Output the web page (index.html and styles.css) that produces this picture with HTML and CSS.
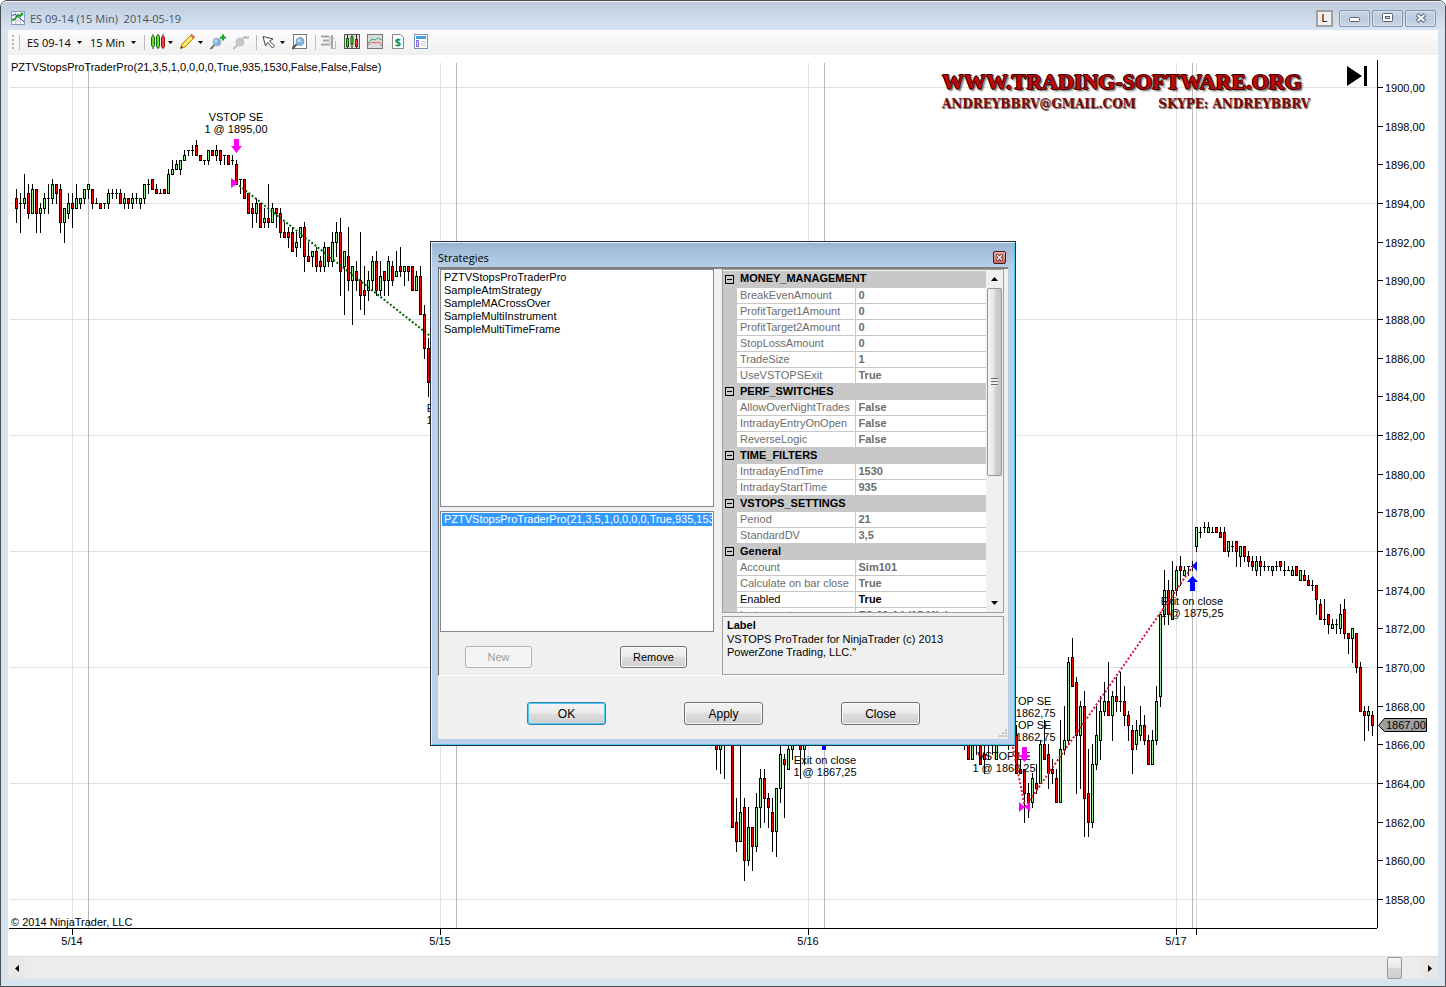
FILE: index.html
```
<!DOCTYPE html>
<html lang="en">
<head>
    <meta charset="UTF-8">
    <meta name="viewport" content="width=device-width, initial-scale=1.0">
    <title>ES 09-14 (15 Min) 2014-05-19</title>
    <link rel="stylesheet" href="styles.css">
</head>
<body>
    <div class="window">
        <header class="titlebar">
            <svg class="app-icon" width="14" height="14" viewBox="0 0 14 14">
                <rect x="0.5" y="0.5" width="13" height="13" fill="#f4f6fb" stroke="#8c98b8"/>
                <path d="M1 4.5H13M1 9.5H13M4.5 1V13M9.5 1V13" stroke="#c3cce0"/>
                <path d="M1 9L4 8L7 4L9 5L12 2" fill="none" stroke="#22a02a" stroke-width="2"/>
                <path d="M1 5L4 3L7 6L10 8L13 11" fill="none" stroke="#3a62a8"/>
            </svg>
            <h1>ES 09-14 (15 Min)&nbsp; 2014-05-19</h1>
            <button class="link-button" type="button">L</button>
            <button class="win-button" type="button" aria-label="Minimize">
                <svg width="12" height="10" viewBox="0 0 12 10"><rect x="0.5" y="4.5" width="10" height="4" rx="1" fill="#fff" stroke="#5a6478"/></svg>
            </button>
            <button class="win-button" type="button" aria-label="Maximize">
                <svg width="12" height="10" viewBox="0 0 12 10"><rect x="0.5" y="0.5" width="10" height="8" rx="1" fill="#fff" stroke="#5a6478"/><rect x="3.5" y="3.5" width="4" height="2" fill="#c9d5e4" stroke="#5a6478"/></svg>
            </button>
            <button class="win-button" type="button" aria-label="Close window">
                <svg width="12" height="10" viewBox="0 0 12 10"><path d="M2 1.5L10 8.5M10 1.5L2 8.5" stroke="#5a6478" stroke-width="4"/><path d="M2.5 2L9.5 8M9.5 2L2.5 8" stroke="#fff" stroke-width="2"/></svg>
            </button>
        </header>

        <nav class="toolbar">
            <span class="grip"></span>
            <span class="sep first"></span>
            <span class="combo">
                <select aria-label="Instrument"><option>ES 09-14</option></select>
                <svg class="caret" width="5" height="3" viewBox="0 0 5 3"><path d="M0 0H5L2.5 3Z"/></svg>
            </span>
            <span class="combo">
                <select aria-label="Interval"><option>15 Min</option></select>
                <svg class="caret" width="5" height="3" viewBox="0 0 5 3"><path d="M0 0H5L2.5 3Z"/></svg>
            </span>
            <span class="sep"></span>
            <button type="button" aria-label="Chart style">
                <svg width="16" height="16" viewBox="0 0 16 16">
                    <path d="M3 0V15M8 0V15M13 0V15" stroke="#333"/>
                    <rect x="1.5" y="2.5" width="3" height="10" rx="1" fill="#5fe02a" stroke="#1d6b10"/>
                    <rect x="6.5" y="1.5" width="3" height="12" rx="1" fill="#5fe02a" stroke="#1d6b10"/>
                    <rect x="11.5" y="2.5" width="3" height="11" rx="1" fill="#f0453c" stroke="#8d1510"/>
                </svg>
                <svg class="caret" width="5" height="3" viewBox="0 0 5 3"><path d="M0 0H5L2.5 3Z"/></svg>
            </button>
            <button type="button" aria-label="Drawing tools">
                <svg width="16" height="16" viewBox="0 0 16 16">
                    <path d="M0.5 14.5L2 10L10.5 1.5L13.5 4.5L5 13Z" fill="#ffd73a" stroke="#b98a12"/>
                    <path d="M3.5 11.5L12 3" stroke="#fff3a8" stroke-width="1.5"/>
                    <path d="M10.5 1.5L12 0.5L14.5 3L13.5 4.5Z" fill="#f08c7c" stroke="#b05a4a"/>
                    <path d="M0.5 14.5L1.2 12L3 13.8Z" fill="#333"/>
                </svg>
                <svg class="caret" width="5" height="3" viewBox="0 0 5 3"><path d="M0 0H5L2.5 3Z"/></svg>
            </button>
            <button type="button" aria-label="Zoom in">
                <svg width="16" height="16" viewBox="0 0 16 16">
                    <path d="M0.5 15L4.5 11" stroke="#777" stroke-width="2"/>
                    <circle cx="7" cy="8" r="4" fill="#7fb2de" stroke="#a5b4c4"/>
                    <circle cx="6" cy="7" r="1.5" fill="#c5e0f6"/>
                    <path d="M13 0.5V6.5M10 3.5H16" stroke="#18a02a" stroke-width="2"/>
                </svg>
            </button>
            <button type="button" aria-label="Zoom out" disabled>
                <svg width="16" height="16" viewBox="0 0 16 16">
                    <path d="M0.5 15L4.5 11" stroke="#bbb" stroke-width="2"/>
                    <circle cx="7" cy="8" r="4" fill="#c6c6c6" stroke="#c0c0c0"/>
                    <path d="M10 3.5H16" stroke="#b5b5b5" stroke-width="2"/>
                </svg>
            </button>
            <span class="sep"></span>
            <button type="button" aria-label="Pointer">
                <svg width="16" height="16" viewBox="0 0 16 16">
                    <path d="M1 2.5L11 5L7.5 7L12.5 12L10.5 14L5.5 8.5L3.5 12Z" fill="#fff" stroke="#444"/>
                </svg>
                <svg class="caret" width="5" height="3" viewBox="0 0 5 3"><path d="M0 0H5L2.5 3Z"/></svg>
            </button>
            <button type="button" aria-label="Zoom frame">
                <svg width="16" height="16" viewBox="0 0 16 16">
                    <rect x="1.5" y="0.5" width="13" height="14" fill="#fff" stroke="#777"/>
                    <path d="M0 15L5 10" stroke="#555" stroke-width="2"/>
                    <circle cx="8" cy="7.5" r="4" fill="#84b6e0" stroke="#8a9db0"/>
                    <circle cx="7" cy="6.5" r="1.5" fill="#cfe6f8"/>
                </svg>
            </button>
            <span class="sep"></span>
            <button type="button" aria-label="Chart trader" disabled>
                <svg width="16" height="16" viewBox="0 0 16 16">
                    <path d="M0 2.5H8M2 6.5H8M0 10.5H8M11 1V15" stroke="#a5a5a5" stroke-width="2"/>
                    <path d="M11 4.5H14M11 14.5H15M14.5 7V15M9 2V12" stroke="#bcbcbc"/>
                </svg>
            </button>
            <button type="button" aria-label="Data series">
                <svg width="16" height="16" viewBox="0 0 16 16">
                    <rect x="0.5" y="0.5" width="15" height="14" fill="#dedede" stroke="#555"/>
                    <path d="M3.5 1V14M8 1V14M12.5 1V14" stroke="#222"/>
                    <rect x="2.5" y="4.5" width="2" height="8" fill="#48d820" stroke="#145c0c"/>
                    <rect x="7" y="3" width="2" height="7" fill="#48d820" stroke="#145c0c"/>
                    <rect x="11.5" y="5.5" width="2" height="7" fill="#f03a30" stroke="#8d1510"/>
                </svg>
            </button>
            <button type="button" aria-label="Indicators">
                <svg width="16" height="16" viewBox="0 0 16 16">
                    <rect x="0.5" y="0.5" width="15" height="14" fill="#d9dddb" stroke="#777"/>
                    <path d="M1 9L5 5L8 6L11 4L15 6" fill="none" stroke="#38a868"/>
                    <path d="M1 11L5 8L8 9L12 8L15 12" fill="none" stroke="#e06060"/>
                </svg>
            </button>
            <button type="button" aria-label="Strategies">
                <svg width="16" height="16" viewBox="0 0 16 16">
                    <path d="M2.5 0.5H10.5L13.5 3.5V14.5H2.5Z" fill="#fff" stroke="#888"/>
                    <text class="dollar" x="8" y="12" text-anchor="middle">$</text>
                </svg>
            </button>
            <button type="button" aria-label="Properties">
                <svg width="16" height="16" viewBox="0 0 16 16">
                    <rect x="1.5" y="0.5" width="13" height="14" fill="#fff" stroke="#7d92b8"/>
                    <rect x="3" y="2" width="10" height="3" fill="#4a9ae0"/>
                    <rect x="3.5" y="6.5" width="2" height="6" fill="#d8c8f8" stroke="#8a70d8"/>
                    <path d="M8 7.5H13M8 9.5H13M8 11.5H13" stroke="#cfcfcf"/>
                </svg>
            </button>
        </nav>

        <main class="chart">
            <svg class="plot" id="plot">
                <g id="grid"></g>
                <text x="3" y="16">PZTVStopsProTraderPro(21,3,5,1,0,0,0,0,True,935,1530,False,False,False)</text>
                <text x="3" y="871">© 2014 NinjaTrader, LLC</text>
                <g id="bars" shape-rendering="crispEdges"></g>
                <g class="notes" text-anchor="middle">
                    <text x="228" y="66">VSTOP SE</text>
                    <text x="228" y="78">1 @ 1895,00</text>
                    <text x="450" y="357">Exit on close</text>
                    <text x="450" y="369">1 @ 1887,00</text>
                    <text x="817" y="709">Exit on close</text>
                    <text x="817" y="721">1 @ 1867,25</text>
                    <text x="1016" y="650">VSTOP SE</text>
                    <text x="1016" y="662">1 @ 1862,75</text>
                    <text x="1016" y="674">VSTOP SE</text>
                    <text x="1016" y="686">1 @ 1862,75</text>
                    <text x="996" y="705">VSTOP LE</text>
                    <text x="996" y="717">1 @ 1868,25</text>
                    <text x="1184" y="550">Exit on close</text>
                    <text x="1184" y="562">1 @ 1875,25</text>
                </g>
                <g id="trades">
                    <path class="loss" d="M228 128L440 295"/>
                    <path class="win" d="M1004 688L1017 752M1017 752L1185 511"/>
                    <path class="sell" d="M226 84H231V91H234L228.5 98L223 91H226ZM223 123L230 128L223 133Z"/>
                    <path class="sell" d="M1014 692H1019V700H1022L1016.5 707L1011 700H1014ZM1011 747L1017 752L1022 747V757L1017 752L1011 757Z"/>
                    <path class="exit" d="M814 687H818V695H814ZM1184.5 521L1190 527H1187V536H1182V527H1179ZM1189 506V516L1184 511Z"/>
                </g>
            </svg>
            <svg class="prices" id="prices"></svg>
            <svg class="dates" id="dates"></svg>

            <div class="logo">
                <p class="logo-site">WWW.TRADING-SOFTWARE.ORG</p>
                <p class="logo-contact"><span>ANDREYBBRV@GMAIL.COM</span><span>SKYPE: ANDREYBBRV</span></p>
            </div>
            <button class="jump" type="button" aria-label="Go to last bar">
                <svg width="21" height="20" viewBox="0 0 21 20"><path d="M0 0L15 10L0 20ZM17 0H20V20H17Z"/></svg>
            </button>
        </main>

        <div class="hscroll">
            <button type="button" aria-label="Scroll left"><svg width="4" height="7" viewBox="0 0 4 7"><path d="M4 0V7L0 3.5Z"/></svg></button>
            <span class="hthumb"></span>
            <button type="button" aria-label="Scroll right"><svg width="4" height="7" viewBox="0 0 4 7"><path d="M0 0V7L4 3.5Z"/></svg></button>
        </div>
    </div>

    <section class="dialog" role="dialog" aria-labelledby="dialogTitle">
        <div class="dialog-title">
            <h2 id="dialogTitle">Strategies</h2>
            <button type="button" aria-label="Close dialog">
                <svg width="7" height="7" viewBox="0 0 7 7"><path d="M0.5 0.5L6.5 6.5M6.5 0.5L0.5 6.5" stroke="#5a2020" stroke-width="3"/><path d="M1 1L6 6M6 1L1 6" stroke="#fff" stroke-width="1.5"/></svg>
            </button>
        </div>
        <div class="dialog-body">
            <div class="panes">
                <div class="left-pane">
                    <select class="list available" size="5" aria-label="Available strategies">
                        <option>PZTVStopsProTraderPro</option>
                        <option>SampleAtmStrategy</option>
                        <option>SampleMACrossOver</option>
                        <option>SampleMultiInstrument</option>
                        <option>SampleMultiTimeFrame</option>
                    </select>
                    <select class="list active" size="5" aria-label="Active strategies">
                        <option selected>PZTVStopsProTraderPro(21,3,5,1,0,0,0,0,True,935,1530</option>
                    </select>
                    <div class="list-buttons">
                        <button class="btn" type="button" disabled>New</button>
                        <button class="btn" type="button">Remove</button>
                    </div>
                </div>
                <div class="right-pane">
                    <div class="props">
                        <div class="props-view">
                            <table>
                                <colgroup><col class="col-fold"><col class="col-name"><col></colgroup>
                                <tbody>
                                    <tr class="group"><td><i class="fold"></i></td><th colspan="2">MONEY_MANAGEMENT</th></tr>
                                    <tr><td></td><th>BreakEvenAmount</th><td>0</td></tr>
                                    <tr><td></td><th>ProfitTarget1Amount</th><td>0</td></tr>
                                    <tr><td></td><th>ProfitTarget2Amount</th><td>0</td></tr>
                                    <tr><td></td><th>StopLossAmount</th><td>0</td></tr>
                                    <tr><td></td><th>TradeSize</th><td>1</td></tr>
                                    <tr><td></td><th>UseVSTOPSExit</th><td>True</td></tr>
                                    <tr class="group"><td><i class="fold"></i></td><th colspan="2">PERF_SWITCHES</th></tr>
                                    <tr><td></td><th>AllowOverNightTrades</th><td>False</td></tr>
                                    <tr><td></td><th>IntradayEntryOnOpen</th><td>False</td></tr>
                                    <tr><td></td><th>ReverseLogic</th><td>False</td></tr>
                                    <tr class="group"><td><i class="fold"></i></td><th colspan="2">TIME_FILTERS</th></tr>
                                    <tr><td></td><th>IntradayEndTime</th><td>1530</td></tr>
                                    <tr><td></td><th>IntradayStartTime</th><td>935</td></tr>
                                    <tr class="group"><td><i class="fold"></i></td><th colspan="2">VSTOPS_SETTINGS</th></tr>
                                    <tr><td></td><th>Period</th><td>21</td></tr>
                                    <tr><td></td><th>StandardDV</th><td>3,5</td></tr>
                                    <tr class="group"><td><i class="fold"></i></td><th colspan="2">General</th></tr>
                                    <tr><td></td><th>Account</th><td>Sim101</td></tr>
                                    <tr><td></td><th>Calculate on bar close</th><td>True</td></tr>
                                    <tr class="editable"><td></td><th>Enabled</th><td>True</td></tr>
                                    <tr><td></td><th>Instrument</th><td>ES 09-14 (15 Min)</td></tr>
                                </tbody>
                            </table>
                        </div>
                        <div class="vscroll">
                            <button type="button" aria-label="Scroll up"><svg width="7" height="4" viewBox="0 0 7 4"><path d="M0 4H7L3.5 0Z"/></svg></button>
                            <span class="vthumb"></span>
                            <button type="button" aria-label="Scroll down"><svg width="7" height="4" viewBox="0 0 7 4"><path d="M0 0H7L3.5 4Z"/></svg></button>
                        </div>
                    </div>
                    <div class="help">
                        <h3>Label</h3>
                        <p>VSTOPS ProTrader for NinjaTrader (c) 2013 PowerZone Trading, LLC."</p>
                    </div>
                </div>
            </div>
            <div class="actions">
                <button class="btn default" type="button">OK</button>
                <button class="btn" type="button">Apply</button>
                <button class="btn" type="button">Close</button>
            </div>
            <svg class="resize" width="9" height="9" viewBox="0 0 9 9"><path d="M6 0H8V2H6ZM3 3H5V5H3ZM6 3H8V5H6ZM0 6H2V8H0ZM3 6H5V8H3ZM6 6H8V8H6Z"/></svg>
        </div>
    </section>

    <script src="chart.js"></script>
</body>
</html>
```
FILE: styles.css
```
* {
    box-sizing: border-box;
}

body {
    margin: 0;
    background: #fff;
    color: #000;
    font-family: 'Liberation Sans', Arial, sans-serif;
    font-size: 11px;
}

h1, h2, h3, p {
    margin: 0;
    font-size: 11px;
    font-weight: normal;
}

button {
    margin: 0;
    padding: 0;
    border: none;
    background: none;
    color: inherit;
    font: inherit;
}

svg {
    display: block;
}

/* main window */
.window {
    display: flex;
    flex-direction: column;
    height: 100vh;
    border: 1px solid #4b4b4f;
    border-radius: 7px 7px 0 0;
    padding: 0 7px 7px;
    background: #d7e4f2;
}

.titlebar {
    display: flex;
    align-items: center;
    flex: none;
    height: 29px;
    margin: 0 -7px;
    padding: 5px 9px 1px 10px;
    border-top: 1px solid #eef3f9;
    border-radius: 6px 6px 0 0;
    background: linear-gradient(#bdcbdc, #d7e4f2);
}

.titlebar h1 {
    flex: 1;
    margin-left: 5px;
    color: #4c5360;
    font-family: 'Open Sans', sans-serif;
    font-size: 11px;
}

.link-button {
    width: 17px;
    height: 17px;
    margin-right: 4px;
    border: 2px solid #a0a0a0;
    background: #f0f0f0;
}

.win-button {
    display: flex;
    align-items: center;
    justify-content: center;
    width: 31px;
    height: 17px;
    margin-left: 2px;
    border: 1px solid #8494ae;
    border-radius: 2px;
    background: linear-gradient(#c9d5e4, #bccbdd 50%, #c8d6e6);
    box-shadow: inset 0 0 0 1px #d8e2ee;
}

.toolbar {
    display: flex;
    align-items: center;
    gap: 7px;
    flex: none;
    height: 25px;
    padding: 0 0 1px 4px;
    background: linear-gradient(#fcfcfc, #f0f0f0);
    font-family: 'Open Sans', sans-serif;
}

.toolbar button {
    display: flex;
    align-items: center;
    gap: 2px;
}

.grip {
    width: 2px;
    height: 14px;
    margin-right: -2px;
    background: repeating-linear-gradient(#b8b8b8 0 2px, transparent 2px 4px);
}

.sep {
    width: 1px;
    height: 15px;
    margin-right: -2px;
    background: #bdbdbd;
}

.sep.first {
    margin-right: 0;
}

.combo {
    display: flex;
    align-items: center;
    gap: 6px;
    margin-right: 1px;
}

.combo select {
    margin: 0;
    padding: 0;
    border: none;
    background: none;
    appearance: none;
    color: #000;
    font: inherit;
}

.dollar {
    fill: #128a28;
    font-size: 11px;
    font-weight: bold;
}

/* chart */
.chart {
    position: relative;
    display: grid;
    grid-template-columns: 1fr 61px;
    grid-template-rows: 1fr 28px;
    flex: 1;
    min-height: 0;
    background: #fff;
}

.plot, .prices, .dates {
    width: 100%;
    height: 100%;
    min-width: 0;
    overflow: hidden;
}

.chart text {
    font-size: 11px;
}

.loss, .win {
    fill: none;
    stroke: #006400;
    stroke-width: 2;
    stroke-dasharray: 2 2;
}

.win {
    stroke: #dc143c;
}

.sell {
    fill: #f0f;
}

.exit {
    fill: #00f;
}

.logo {
    position: absolute;
    top: 12px;
    right: 128px;
    width: 368px;
    white-space: nowrap;
}

.logo-site {
    color: #c00808;
    font-family: 'Liberation Serif', serif;
    font-size: 22px;
    line-height: 30px;
    font-weight: bold;
    text-shadow: 1px 0 0 #300, -1px 0 0 #300, 0 1px 0 #300, 0 -1px 0 #300, 2px 2px 2px #444;
}

.logo-contact {
    display: flex;
    justify-content: space-between;
    color: #7c0a0a;
    font-family: 'DejaVu Serif', serif;
    font-size: 12px;
    line-height: 14px;
    font-weight: bold;
    text-shadow: 1px 1px 1px #555;
}

.jump {
    position: absolute;
    top: 11px;
    right: 70px;
}

/* bottom scrollbar */
.hscroll {
    display: flex;
    flex: none;
    height: 23px;
    border-top: 1px solid #dcdcdc;
    background: #ececec;
}

.hscroll button {
    display: flex;
    align-items: center;
    justify-content: center;
    width: 17px;
    background: #e8e8e8;
}

.hthumb {
    width: 15px;
    margin-left: auto;
    margin-right: 19px;
    border: 1px solid #979797;
    border-radius: 2px;
    background: linear-gradient(#f5f5f5, #e9e9e9 48%, #d5d5d5 52%, #d0d0d0);
}

/* dialog */
.dialog {
    position: absolute;
    left: 430px;
    top: 241px;
    width: 586px;
    padding: 1px 7px 6px;
    border: 1px solid #2b2f36;
    background: linear-gradient(#98b4d2, #b9d0ea 26px);
    box-shadow: inset 1px 1px 0 #e6f1fb, inset -1px -1px 0 #4cc8ee;
}

.dialog-title {
    display: flex;
    align-items: center;
    justify-content: space-between;
    height: 24px;
    padding: 5px 2px 1px 0;
}

.dialog-title h2 {
    font-family: 'Open Sans', sans-serif;
    font-size: 11px;
}

.dialog-title button {
    display: flex;
    align-items: center;
    justify-content: center;
    width: 13px;
    height: 13px;
    border: 1px solid #4c1820;
    border-radius: 2px;
    background: linear-gradient(#e8aca4, #c96a60);
}

.dialog-body {
    position: relative;
    background: #f0f0f0;
}

.panes {
    display: flex;
    gap: 8px;
    height: 409px;
    padding: 0 4px 0 1px;
    border: solid #fff;
    border-width: 2px 0 1px 1px;
    border-top-color: #808080;
    border-left-color: #696969;
}

.left-pane {
    display: flex;
    flex-direction: column;
    width: 274px;
}

.list {
    display: block;
    width: 274px;
    height: 238px;
    margin: 0;
    padding: 1px;
    border: 1px solid #828790;
    border-radius: 0;
    outline: none;
    background: #fff;
    color: #000;
    font-family: 'Liberation Sans', Arial, sans-serif;
    font-size: 11px;
    overflow: hidden;
}

.list option {
    height: 13px;
    min-height: 13px;
    padding: 0 2px;
    line-height: 13px;
    overflow: hidden;
}

.list option:checked {
    background: linear-gradient(#39f, #39f);
    color: #fff;
}

.list.active {
    height: 121px;
    margin-top: 4px;
}

.list-buttons {
    display: flex;
    justify-content: space-between;
    padding: 14px 27px 0 25px;
}

.btn {
    width: 79px;
    height: 23px;
    border: 1px solid #707070;
    border-radius: 3px;
    background: linear-gradient(#f2f2f2, #ebebeb 49%, #dddddd 51%, #cfcfcf);
    box-shadow: inset 0 0 0 1px #fafafa;
    font-size: 12px;
}

.list-buttons .btn {
    width: 67px;
    height: 22px;
    font-size: 11px;
}

.btn:disabled {
    border-color: #adb2b5;
    background: #f4f4f4;
    color: #9a9a9a;
}

.btn.default {
    border-color: #3c7fb1;
    box-shadow: inset 0 0 0 1px #48cdf0;
}

.right-pane {
    display: flex;
    flex-direction: column;
    flex: 1;
    gap: 3px;
}

.props {
    display: flex;
    height: 344px;
    border: 1px solid #a0a0a0;
    overflow: hidden;
}

.props-view {
    flex: 1;
    padding-top: 1px;
    overflow: hidden;
}

.props table {
    width: 100%;
    border-collapse: collapse;
    table-layout: fixed;
    background: #fff;
    color: #6d6d6d;
}

.col-fold {
    width: 14px;
}

.col-name {
    width: 118px;
}

.props tr > :first-child {
    padding: 0 0 0 2px;
    border: none;
    background: #c8c8c8;
}

.props th, .props td {
    height: 16px;
    padding: 0 0 0 3px;
    border-bottom: 1px solid #c8c8c8;
    line-height: 15px;
    text-align: left;
    white-space: nowrap;
}

.props th {
    border-right: 1px solid #c8c8c8;
    font-weight: normal;
}

.props td {
    font-weight: bold;
}

.props .group th {
    background: #c8c8c8;
    color: #000;
    font-weight: bold;
}

.props .editable {
    color: #000;
}

.fold {
    display: block;
    width: 9px;
    height: 9px;
    border: 1px solid #000;
    background: linear-gradient(#000, #000) center / 5px 1px no-repeat;
}

.vscroll {
    display: flex;
    flex-direction: column;
    width: 17px;
    background: #f0f0f0;
}

.vscroll button {
    display: flex;
    align-items: center;
    justify-content: center;
    height: 18px;
}

.vthumb {
    flex: none;
    width: 15px;
    height: 188px;
    margin: 0 1px auto;
    border: 1px solid #979797;
    border-radius: 2px;
    background:
        repeating-linear-gradient(#666 0 1px, #f0f0f0 1px 3px) center / 7px 8px no-repeat,
        linear-gradient(90deg, #f5f5f5, #e6e6e6 48%, #d2d2d2 52%, #c4c4c4);
}

.help {
    flex: 1;
    padding: 1px 4px;
    border: 1px solid #a0a0a0;
    line-height: 13px;
}

.help h3 {
    font-weight: bold;
    line-height: 15px;
}

.help p {
    width: 230px;
}

.actions {
    display: flex;
    justify-content: space-between;
    padding: 26px 88px 14px 89px;
}

.resize {
    position: absolute;
    right: 0;
    bottom: 1px;
    fill: #c0c0c0;
}
```
FILE: chart.js
```
// Bars are [open, high, low, close] in ticks of 0.25, relative to each run's base price
const runs = [
    { start: 0, base: 1894, bars: [
        [1,3,-4,-1],[0,2,-6,0],[0,6,-1,1],[2,4,-3,-2],[-2,4,-2,3],[3,3,-6,-2],[-2,0,-6,-1],[-1,2,-2,1],
        [1,4,-2,1],[1,5,0,4],[4,4,0,2],[3,4,-6,-4],[-4,-1,-8,-1],[-2,2,-3,0],[0,2,-5,-1],[-1,4,-1,1],
        [0,1,-1,1],[1,3,0,3],[3,4,1,4],[3,3,-1,0],[0,1,0,0],[0,0,-1,-1],[0,0,-1,0],[0,3,-1,2],
        [2,3,1,2],[2,3,1,2],[2,3,0,0],[0,2,-1,1],[1,1,-1,0],[0,2,-1,1],[1,2,0,1],[0,1,-1,1],
        [1,4,0,4],[4,5,2,4],[5,5,3,3],[3,4,2,2],[2,3,2,2],[3,3,2,2],[2,7,2,6],[6,9,6,7],
        [7,9,7,8],[7,9,6,9],[9,11,9,10],[11,11,10,11],[11,12,10,11],[12,13,10,10],[10,10,9,9],[9,9,8,9],
        [9,11,8,11],[11,11,10,10],[10,12,9,11],[11,11,8,9],[10,10,8,10],[10,10,8,8],[9,10,8,9],[8,9,4,4],
        [5,5,2,5],[5,5,1,1],[2,2,-2,-2],[-1,0,-5,-2],[-2,1,-4,0],[0,0,-5,-5],[-4,-1,-5,-3],[-3,4,-5,-4],
        [-4,0,-4,-1],[-1,-1,-5,-2],[-2,-1,-7,-6],[-6,-4,-7,-7],[-6,-5,-9,-7],[-6,-5,-10,-10],[-9,-6,-11,-8],[-7,-5,-9,-5],
        [-5,-4,-14,-11],[-11,-8,-12,-12],[-11,-10,-13,-10],[-10,-9,-14,-13],[-12,-11,-14,-13],[-13,-8,-14,-9],[-9,-9,-13,-12],[-12,-6,-13,-8],
        [-8,-4,-11,-6],[-6,-3,-19,-14],[-13,-10,-23,-10],[-11,-5,-18,-16],[-16,-13,-25,-13],[-14,-12,-18,-16],[-16,-6,-22,-19],[-18,-13,-23,-19],
        [-18,-14,-20,-16],[-16,-11,-18,-12],[-12,-10,-19,-18],[-18,-12,-19,-15],[-14,-14,-19,-16],[-16,-11,-19,-12],[-13,-12,-17,-16],[-15,-10,-15,-14],
        [-13,-9,-15,-14],[-14,-13,-17,-13],[-13,-13,-16,-14],[-13,-13,-18,-18],[-18,-14,-18,-15],[-15,-13,-23,-23],[-23,-21,-32,-30],[-30,-28,-40,-37]
    ] },
    { start: 175, base: 1864, bars: [
        [12,14,3,7],[7,12,2,12],[10,12,1,10],[12,14,10,14],[14,15,-9,-9],[-8,-3,-14,-12],[-12,9,-12,-6],[-5,-3,-20,-16],
        [-16,-5,-17,-9],[-9,-9,-18,-13],[-13,-2,-14,-5],[-5,3,-9,1],[1,3,-8,-3],[-3,-2,-9,-5],[-6,-3,-14,-10],[-10,-1,-15,-1],
        [-1,9,-4,6],[5,6,-7,4],[3,9,3,7],[7,12,5,9],[10,12,9,10],[12,12,1,7],[7,12,4,10]
    ] },
    { start: 237, base: 1864, bars: [
        [12,14,7,12],[12,14,5,5],[5,12,5,10],[12,14,6,12],[12,14,4,4],[6,12,2,5],[10,12,5,10],[10,12,6,10],
        [5,12,5,10],[10,12,9,10],[10,12,9,10],[10,12,7,10],[11,12,9,10],[10,12,2,2],[3,5,2,2],[3,3,-8,-2],
        [-2,0,-7,-4],[-4,2,-5,1],[0,4,-2,-1],[0,9,0,8],[8,13,5,5],[6,8,-1,2],[3,5,0,2],[1,3,-4,-4],
        [-4,13,-4,7],[7,16,6,9],[9,26,8,25],[26,30,20,20],[21,22,-2,10],[10,17,-1,16],[16,19,-11,-3],[-2,7,-11,-8],
        [-8,8,-9,4],[4,16,3,10],[9,18,5,15],[15,21,14,17],[17,25,14,14],[14,19,9,18],[18,22,15,17],[17,23,15,17],
        [17,20,12,14],[14,15,9,12],[11,12,2,7],[8,13,7,11],[10,16,9,12],[12,14,8,9],[9,10,4,4],[4,11,4,9],
        [9,20,8,17],[18,35,16,35],[35,44,33,40],[40,42,33,35],[34,46,34,40],[40,45,39,44],[45,47,41,44],[43,45,43,44],
        [45,45,43,45],[45,46,44,45]
    ] },
    { start: 295, base: 1876, bars: [
        [1,5,0,5],[4,5,3,4],[5,6,4,5],[4,6,4,5],[4,5,4,4],[5,5,4,4],[4,5,3,3],[4,5,0,0],
        [0,2,-1,2],[1,2,0,1],[2,2,-3,0],[-1,1,-3,1],[1,1,-2,-1],[-1,0,-3,-2],[-2,-1,-4,-3],[-4,-1,-5,-2],
        [-2,-1,-5,-3],[-3,-2,-4,-3],[-3,-3,-4,-3],[-4,-3,-5,-3],[-3,-2,-4,-3],[-2,-2,-4,-3],[-4,-2,-5,-4],[-4,-3,-4,-4],
        [-5,-3,-5,-4],[-3,-3,-5,-5],[-6,-4,-6,-4],[-5,-4,-6,-6],[-6,-5,-7,-7],[-7,-6,-8,-7],[-7,-7,-13,-10],[-11,-10,-14,-14],
        [-14,-10,-15,-14],[-13,-13,-17,-15],[-16,-14,-16,-15],[-15,-14,-17,-15],[-16,-11,-17,-13],[-12,-10,-18,-17],[-17,-17,-21,-18],[-18,-16,-23,-16],
        [-17,-17,-25,-24],[-24,-23,-33,-33],[-33,-32,-39,-34],[-34,-32,-37,-33],[-34,-33,-38,-36]
    ] }
];

const plot = document.getElementById('bars');
const grid = document.getElementById('grid');
const prices = document.getElementById('prices');
const dates = document.getElementById('dates');

function add(parent, name, attrs, text) {
    const el = document.createElementNS('http://www.w3.org/2000/svg', name);
    for (const key in attrs) {
        el.setAttribute(key, attrs[key]);
    }
    if (text) {
        el.textContent = text;
    }
    parent.appendChild(el);
}

function rect(parent, x, y, width, height, fill) {
    add(parent, 'rect', { x, y, width, height, fill });
}

function priceY(price) {
    return Math.round(844 - (price - 1858) * 58 / 3);
}

// grid
for (let price = 1900; price >= 1858; price -= 6) {
    rect(grid, 2, priceY(price), '100%', 1, '#e0e0e0');
}
[64, 432, 800, 1168, 1188].forEach(x => rect(grid, x, 8, 1, '100%', '#e0e0e0'));
[80, 448, 816, 1184].forEach(x => rect(grid, x, 8, 1, '100%', '#b8b8b8'));

// candles
runs.forEach(run => {
    run.bars.forEach((bar, i) => {
        const [open, high, low, close] = bar.map(t => priceY(run.base + t / 4));
        const x = 8 + (run.start + i) * 4;
        const top = Math.min(open, close);
        const height = Math.abs(open - close) + 1;
        rect(plot, x, high, 1, low - high + 1, '#000');
        rect(plot, x - 1, top, 3, height, '#000');
        if (height > 2) {
            rect(plot, x, top + 1, 1, height - 2, close > open ? '#f00' : '#90ee90');
        }
    });
});

// price axis
rect(prices, 0, 5, 1, '100%', '#000');
for (let price = 1900; price >= 1858; price -= 2) {
    const y = priceY(price);
    rect(prices, 1, y, 5, 1, '#000');
    add(prices, 'text', { x: 8, y: y + 5 }, price + ',00');
}
add(prices, 'path', { d: 'M1.5 670.5L7.5 663.5H49.5V676.5H7.5Z', fill: '#a0a0a0', stroke: '#000' });
add(prices, 'text', { x: 9, y: 674 }, '1867,00');

// date axis
rect(dates, 1, 0, '100%', 1, '#000');
['5/14', '5/15', '5/16', '5/17'].forEach((day, i) => {
    const x = 64 + i * 368;
    rect(dates, x, 1, 1, 6, '#000');
    add(dates, 'text', { x, y: 17, 'text-anchor': 'middle' }, day);
});
rect(dates, 1188, 1, 1, 6, '#000');
```
